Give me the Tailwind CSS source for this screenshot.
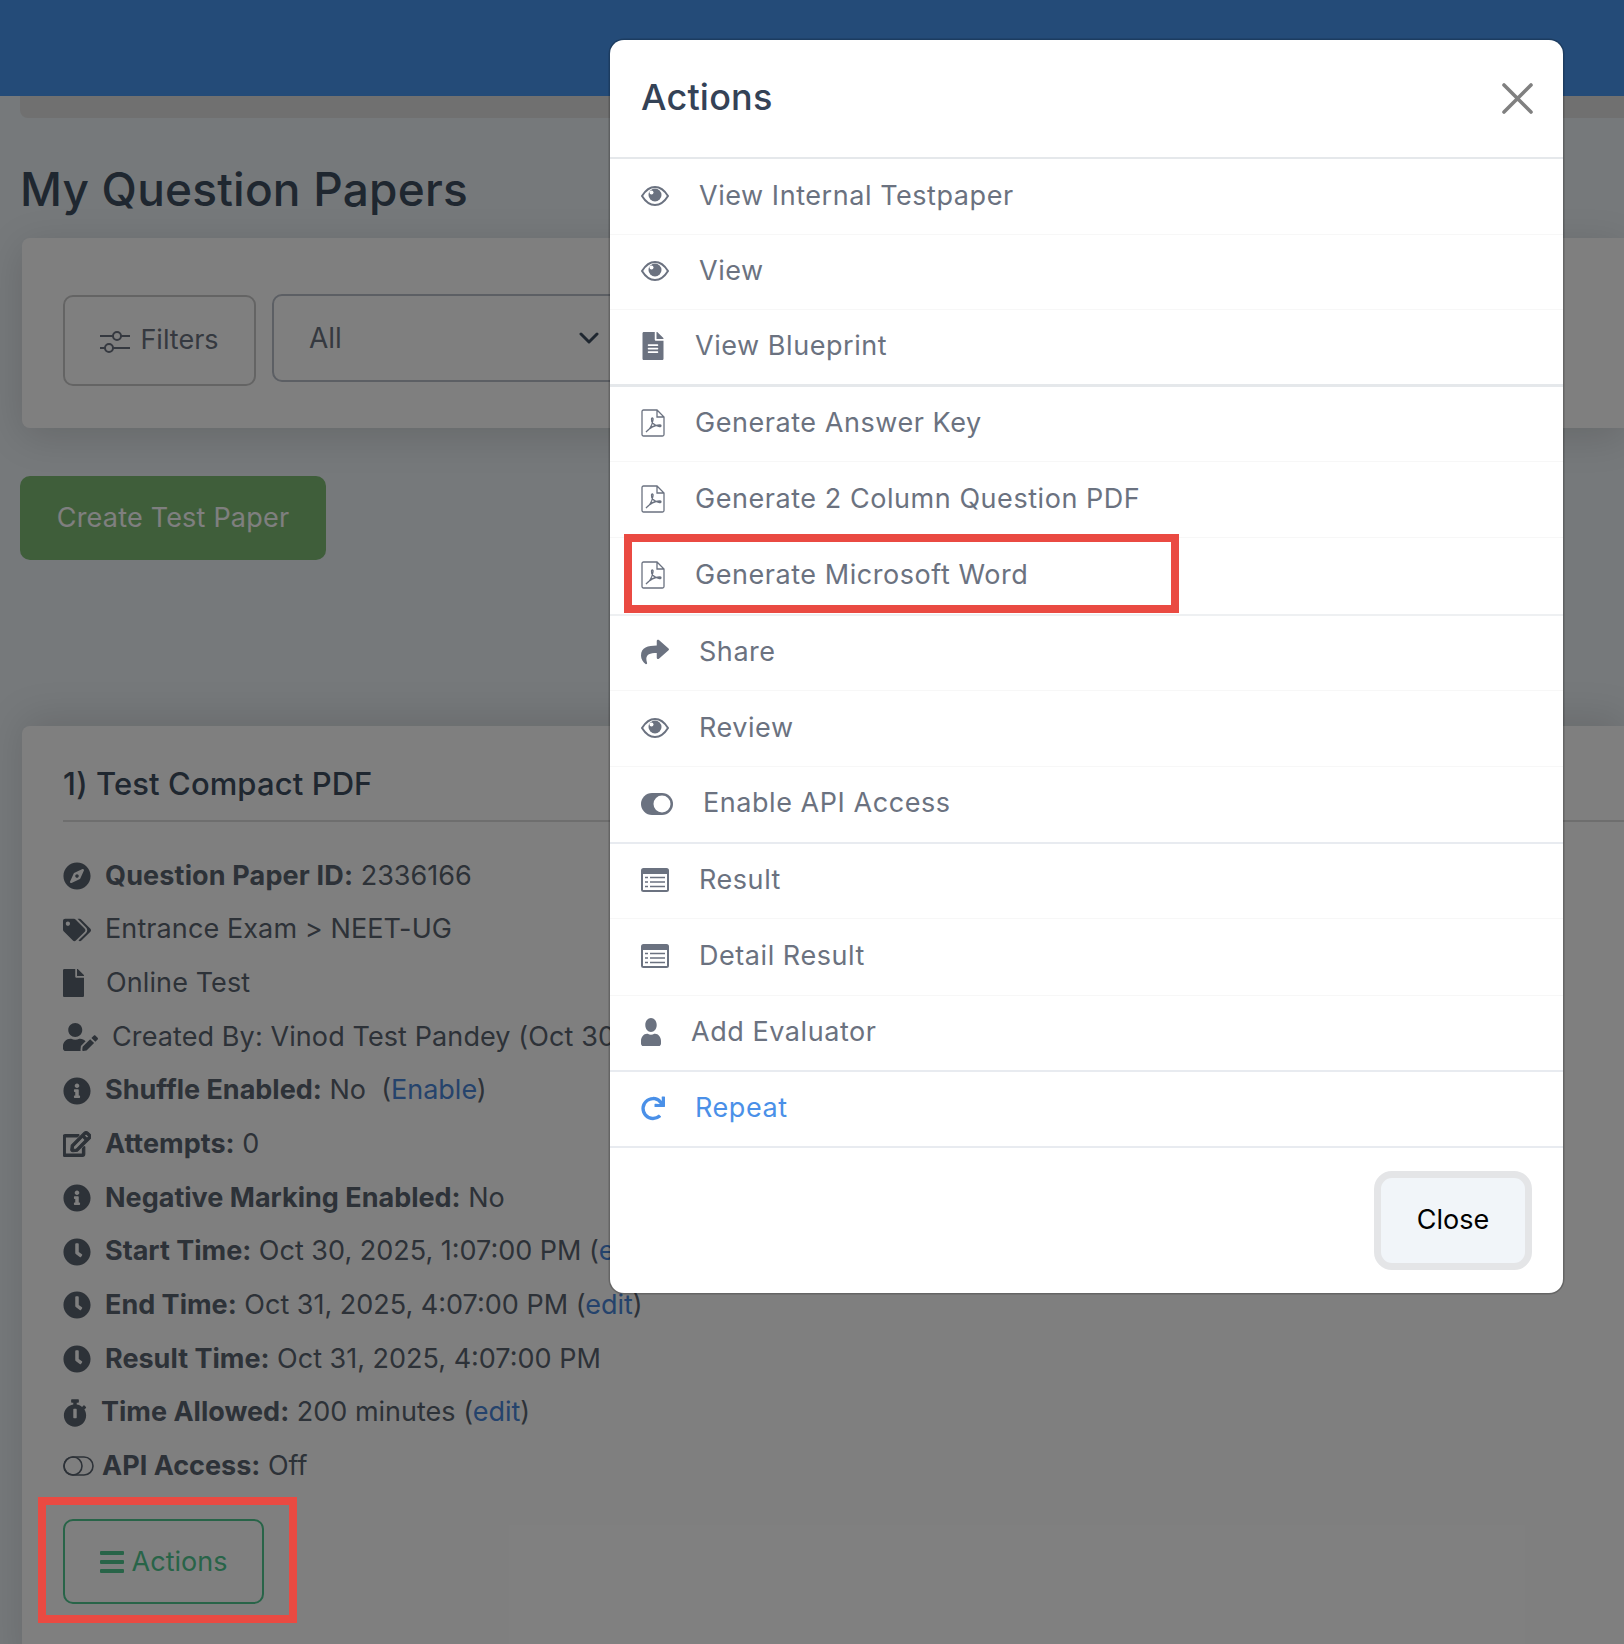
<!DOCTYPE html>
<html lang="en">
<head>
    <meta charset="UTF-8">
    <title>My Question Papers</title>
    <script src="https://cdn.jsdelivr.net/npm/@tailwindcss/browser@4"></script>
</head>
<body class="bg-[#ecf2f6] font-['Inter',sans-serif]">
<div class="relative h-[1644px] overflow-hidden">
    <!-- page behind the backdrop -->
    <header class="h-[96px] bg-[#4896f0]"></header>
    <div class="ml-[20px] h-[22px] rounded-bl-[8px] bg-[#e0e0e0]"></div>

    <main class="pl-[20px]">
        <h1 class="mt-[43px] text-[46px] leading-[56px] tracking-[0.2px] font-medium text-[#3e4e60]">My Question Papers</h1>

        <section class="mt-[21px] ml-[2px] h-[190px] rounded-l-[8px] bg-white shadow-[0_8px_40px_rgba(0,0,0,0.14)] pl-[41px] pt-[57px] flex items-start gap-[16px]">
            <button class="h-[91px] w-[193px] rounded-[10px] border-2 border-[#c9c9c9] flex items-center justify-center gap-[10px] text-[27px] text-[#6b7280]">
                <svg class="w-[30px] h-[26px]" viewBox="0 0 30 26" fill="none" stroke="currentColor" stroke-width="2">
                    <path d="M0 8h13M21 8h9M0 20h5M13 20h17"/>
                    <circle cx="17" cy="8" r="4"/>
                    <circle cx="9" cy="20" r="4"/>
                </svg>
                Filters
            </button>
            <div class="-mt-[1px] h-[88px] w-[400px] rounded-[10px] border-2 border-[#b8bec8] flex items-center justify-between pl-[35px] pr-[71px] text-[28px] text-[#6b7280]">
                All
                <svg class="w-[20px] h-[12px]" viewBox="0 0 20 12" fill="none" stroke="#3e4e60" stroke-width="3" stroke-linecap="round" stroke-linejoin="round"><path d="M2 2l8 8 8-8"/></svg>
            </div>
        </section>

        <button class="mt-[48px] h-[84px] w-[306px] rounded-[10px] bg-[#7ebc74] text-white text-[27px] tracking-[0.2px]">Create Test Paper</button>

        <section class="mt-[166px] ml-[2px] h-[950px] rounded-tl-[8px] bg-white shadow-[0_-8px_40px_rgba(0,0,0,0.12)] pl-[41px] pt-[34px]">
            <h2 class="h-[62px] text-[31px] leading-[48px] tracking-[0.1px] font-medium text-[#3e4e60] border-b-2 border-[#dcdcdc]">1) Test Compact PDF</h2>
            <ul class="mt-[27px] text-[27px] text-[#5b6470]">
                <li class="h-[53.7px] flex items-center gap-[14px]">
                    <svg class="w-[28px] h-[28px] fill-[#5b6470]" viewBox="0 0 496 512"><path d="M225.38 233.37c-12.5 12.5-12.5 32.76 0 45.25 12.49 12.5 32.76 12.5 45.25 0 12.5-12.5 12.5-32.76 0-45.25-12.5-12.49-32.76-12.49-45.25 0zM248 8C111.03 8 0 119.03 0 256s111.03 248 248 248 248-111.03 248-248S384.97 8 248 8zm126.14 148.05L308.17 300.4a31.938 31.938 0 0 1-15.77 15.77l-144.34 65.97c-16.65 7.61-33.81-9.55-26.2-26.2l65.98-144.35a31.938 31.938 0 0 1 15.77-15.77l144.34-65.97c16.65-7.6 33.8 9.55 26.19 26.2z"/></svg>
                    <span class="whitespace-pre"><b class="font-bold tracking-[0.15px]">Question Paper ID:</b> 2336166</span>
                </li>
                <li class="h-[53.7px] flex items-center gap-[14px]">
                    <svg class="w-[28px] h-[28px] fill-[#5b6470]" viewBox="0 0 640 512"><path d="M497.941 225.941L286.059 14.059A48 48 0 0 0 252.118 0H48C21.49 0 0 21.49 0 48v204.118a48 48 0 0 0 14.059 33.941l211.882 211.882c18.744 18.745 49.136 18.746 67.882 0l204.118-204.118c18.745-18.745 18.745-49.137 0-67.882zM112 160c-26.51 0-48-21.49-48-48s21.49-48 48-48 48 21.49 48 48-21.49 48-48 48zm513.941 133.823L421.823 497.941c-18.745 18.745-49.137 18.745-67.882 0l-.36-.36L527.64 323.522c16.999-16.999 26.36-39.6 26.36-63.64s-9.362-46.641-26.36-63.64L331.397 0h48.721a48 48 0 0 1 33.941 14.059l211.882 211.882c18.745 18.745 18.745 49.137 0 67.882z"/></svg>
                    <span class="tracking-[0.1px]">Entrance Exam &gt; NEET-UG</span>
                </li>
                <li class="h-[53.7px] flex items-center gap-[22px]">
                    <svg class="w-[21px] h-[28px] fill-[#5b6470]" viewBox="0 0 384 512"><path d="M224 136V0H24C10.7 0 0 10.7 0 24v464c0 13.3 10.7 24 24 24h336c13.3 0 24-10.7 24-24V160H248c-13.2 0-24-10.8-24-24zm160-14.1v6.1H256V0h6.1c6.4 0 12.5 2.5 17 7l97.9 98c4.5 4.5 7 10.6 7 16.9z"/></svg>
                    <span class="tracking-[0.1px]">Online Test</span>
                </li>
                <li class="h-[53.7px] flex items-center gap-[14px]">
                    <svg class="w-[35px] h-[28px] fill-[#5b6470]" viewBox="0 0 640 512"><path d="M224 256c70.7 0 128-57.3 128-128S294.7 0 224 0 96 57.3 96 128s57.3 128 128 128zm89.6 32h-16.7c-22.2 10.2-46.9 16-72.9 16s-50.6-5.8-72.9-16h-16.7C60.2 288 0 348.2 0 422.4V464c0 26.5 21.5 48 48 48h274.9c-2.4-6.8-3.4-14-2.6-21.3l6.8-60.9 1.2-11.1 7.9-7.9 77.3-77.3c-24.5-27.7-60-45.5-99.9-45.5zm45.3 145.3l-6.8 61c-1.1 10.2 7.5 18.8 17.6 17.6l60.9-6.8 137.9-137.9-71.7-71.7-137.9 137.8zM633 268.9L595.1 231c-9.3-9.3-24.5-9.3-33.8 0l-37.8 37.8-4.1 4.1 71.8 71.7 41.8-41.8c9.3-9.4 9.3-24.5 0-33.9z"/></svg>
                    <span class="whitespace-nowrap tracking-[0.1px]">Created By: Vinod Test Pandey (Oct 30, 2025)</span>
                </li>
                <li class="h-[53.7px] flex items-center gap-[14px]">
                    <svg class="w-[28px] h-[28px] fill-[#5b6470]" viewBox="0 0 512 512"><path d="M256 8C119.043 8 8 119.083 8 256c0 136.997 111.043 248 248 248s248-111.003 248-248C504 119.083 392.957 8 256 8zm0 110c23.196 0 42 18.804 42 42s-18.804 42-42 42-42-18.804-42-42 18.804-42 42-42zm56 254c0 6.627-5.373 12-12 12h-88c-6.627 0-12-5.373-12-12v-24c0-6.627 5.373-12 12-12h12v-64h-12c-6.627 0-12-5.373-12-12v-24c0-6.627 5.373-12 12-12h64c6.627 0 12 5.373 12 12v100h12c6.627 0 12 5.373 12 12v24z"/></svg>
                    <span><b class="font-bold">Shuffle Enabled:</b> No &nbsp;(<a class="text-[#4a86d8]">Enable</a>)</span>
                </li>
                <li class="h-[53.7px] flex items-center gap-[14px]">
                    <svg class="w-[28px] h-[28px] fill-[#5b6470] stroke-[#5b6470] stroke-[24px]" viewBox="0 0 576 512"><path d="M402.3 344.9l32-32c5-5 13.7-1.5 13.7 5.7V464c0 26.5-21.5 48-48 48H48c-26.5 0-48-21.5-48-48V112c0-26.5 21.5-48 48-48h273.5c7.1 0 10.7 8.6 5.7 13.7l-32 32c-1.5 1.5-3.5 2.3-5.7 2.3H48v352h352V350.5c0-2.1.8-4.1 2.3-5.6zm156.6-201.8L296.3 405.7l-90.4 10c-26.2 2.9-48.5-19.2-45.6-45.6l10-90.4L432.9 17.1c22.9-22.9 59.9-22.9 82.7 0l43.2 43.2c22.9 22.9 22.9 60 .1 82.8zM460.1 174L402 115.9 216.2 301.8l-7.3 65.3 65.3-7.3L460.1 174zm64.8-79.7l-43.2-43.2c-4.1-4.1-10.8-4.1-14.8 0L436 82l58.1 58.1 30.9-30.9c4-4.2 4-10.8-.1-14.9z"/></svg>
                    <span><b class="font-bold">Attempts:</b> 0</span>
                </li>
                <li class="h-[53.7px] flex items-center gap-[14px]">
                    <svg class="w-[28px] h-[28px] fill-[#5b6470]" viewBox="0 0 512 512"><path d="M256 8C119.043 8 8 119.083 8 256c0 136.997 111.043 248 248 248s248-111.003 248-248C504 119.083 392.957 8 256 8zm0 110c23.196 0 42 18.804 42 42s-18.804 42-42 42-42-18.804-42-42 18.804-42 42-42zm56 254c0 6.627-5.373 12-12 12h-88c-6.627 0-12-5.373-12-12v-24c0-6.627 5.373-12 12-12h12v-64h-12c-6.627 0-12-5.373-12-12v-24c0-6.627 5.373-12 12-12h64c6.627 0 12 5.373 12 12v100h12c6.627 0 12 5.373 12 12v24z"/></svg>
                    <span><b class="font-bold">Negative Marking Enabled:</b> No</span>
                </li>
                <li class="h-[53.7px] flex items-center gap-[14px]">
                    <svg class="w-[28px] h-[28px] fill-[#5b6470]" viewBox="0 0 512 512"><path d="M256,8C119,8,8,119,8,256S119,504,256,504,504,393,504,256,393,8,256,8Zm92.49,313h0l-20,25a16,16,0,0,1-22.49,2.5h0l-67-49.72a40,40,0,0,1-15-31.23V112a16,16,0,0,1,16-16h32a16,16,0,0,1,16,16V256l58,42.5A16,16,0,0,1,348.49,321Z"/></svg>
                    <span class="whitespace-nowrap"><b class="font-bold">Start Time:</b> Oct 30, 2025, 1:07:00 PM (<a class="text-[#4a86d8]">edit</a>)</span>
                </li>
                <li class="h-[53.7px] flex items-center gap-[14px]">
                    <svg class="w-[28px] h-[28px] fill-[#5b6470]" viewBox="0 0 512 512"><path d="M256,8C119,8,8,119,8,256S119,504,256,504,504,393,504,256,393,8,256,8Zm92.49,313h0l-20,25a16,16,0,0,1-22.49,2.5h0l-67-49.72a40,40,0,0,1-15-31.23V112a16,16,0,0,1,16-16h32a16,16,0,0,1,16,16V256l58,42.5A16,16,0,0,1,348.49,321Z"/></svg>
                    <span class="whitespace-nowrap"><b class="font-bold">End Time:</b> Oct 31, 2025, 4:07:00 PM (<a class="text-[#4a86d8]">edit</a>)</span>
                </li>
                <li class="h-[53.7px] flex items-center gap-[14px]">
                    <svg class="w-[28px] h-[28px] fill-[#5b6470]" viewBox="0 0 512 512"><path d="M256,8C119,8,8,119,8,256S119,504,256,504,504,393,504,256,393,8,256,8Zm92.49,313h0l-20,25a16,16,0,0,1-22.49,2.5h0l-67-49.72a40,40,0,0,1-15-31.23V112a16,16,0,0,1,16-16h32a16,16,0,0,1,16,16V256l58,42.5A16,16,0,0,1,348.49,321Z"/></svg>
                    <span class="whitespace-nowrap"><b class="font-bold">Result Time:</b> Oct 31, 2025, 4:07:00 PM</span>
                </li>
                <li class="h-[53.7px] flex items-center gap-[14px]">
                    <svg class="w-[24px] h-[28px] fill-[#5b6470]" viewBox="0 0 448 512"><path d="M432 304c0 114.9-93.1 208-208 208S16 418.9 16 304c0-104 76.3-190.2 176-205.5V64h-28c-6.6 0-12-5.4-12-12V12c0-6.6 5.4-12 12-12h120c6.6 0 12 5.4 12 12v40c0 6.6-5.4 12-12 12h-28v34.5c37.5 5.8 71.7 21.6 99.7 44.6l27.5-27.5c4.7-4.7 12.3-4.7 17 0l28.3 28.3c4.7 4.7 4.7 12.3 0 17l-29.4 29.4-.6.6C419.7 223.3 432 262.2 432 304zm-176 36V188.5c0-6.6-5.4-12-12-12h-40c-6.6 0-12 5.4-12 12V340c0 6.6 5.4 12 12 12h40c6.6 0 12-5.4 12-12z"/></svg>
                    <span class="whitespace-nowrap"><b class="font-bold">Time Allowed:</b> 200 minutes (<a class="text-[#4a86d8]">edit</a>)</span>
                </li>
                <li class="h-[53.7px] flex items-center gap-[8px]">
                    <svg class="w-[31px] h-[20px]" viewBox="0 0 31 20" fill="none" stroke="#5b6470" stroke-width="1.6"><rect x="1" y="1" width="29" height="18" rx="9"/><circle cx="10" cy="10" r="9"/></svg>
                    <span><b class="font-bold">API Access:</b> Off</span>
                </li>
            </ul>
            <button class="mt-[26px] h-[85px] w-[201px] rounded-[10px] border-2 border-[#50c890] flex items-center justify-center gap-[8px] text-[27px] text-[#50c890]">
                <svg class="w-[24px] h-[22px] fill-current" viewBox="0 0 24 22"><rect width="24" height="4" rx="1"/><rect y="9" width="24" height="4" rx="1"/><rect y="18" width="24" height="4" rx="1"/></svg>
                Actions
            </button>
        </section>
    </main>

    <!-- backdrop -->
    <div class="absolute inset-0 bg-black/50"></div>

    <!-- callout round the page's Actions button -->
    <div class="absolute left-[38px] top-[1497px] w-[259px] h-[126px] border-[8px] border-[#ea4a42]"></div>

    <!-- modal -->
    <div class="absolute left-[610px] top-[40px] w-[953px] h-[1253px] rounded-[14px] bg-white shadow-[0_0_0_1.5px_rgba(0,0,0,0.2)]">
        <div class="h-[119px] px-[31px] pb-[4px] border-b-2 border-[#e5e8eb] flex items-center justify-between">
            <h3 class="text-[36px] tracking-[0.2px] font-medium text-[#344256]">Actions</h3>
            <svg class="w-[31px] h-[31px] -mr-[1px] mt-[4px]" viewBox="0 0 31 31" stroke="#808080" stroke-width="3.6" stroke-linecap="round"><path d="M2 2l27 27M29 2L2 29"/></svg>
        </div>

        <ul class="text-[27px] tracking-[0.55px] text-[#6b7280]">
            <li class="h-[75.5px] pb-[1px] px-[31px] flex items-center gap-[30px] border-b border-[#f7f7f7]">
                <svg class="w-[28px] h-[20px]" viewBox="0 0 28 20"><path d="M1 10C5 3.5 9 1 14 1s9 2.500 13 9c-4 6.500-8 9-13 9S5 16.500 1 10z" fill="none" stroke="#6b7280" stroke-width="2"/><circle cx="14" cy="9" r="6.500" fill="#6b7280"/><circle cx="10.500" cy="6.500" r="2" fill="#fff"/></svg>
                <span>View Internal Testpaper</span>
            </li>
            <li class="h-[75.5px] pb-[1px] px-[31px] flex items-center gap-[30px] border-b border-[#f7f7f7]">
                <svg class="w-[28px] h-[20px]" viewBox="0 0 28 20"><path d="M1 10C5 3.5 9 1 14 1s9 2.500 13 9c-4 6.500-8 9-13 9S5 16.500 1 10z" fill="none" stroke="#6b7280" stroke-width="2"/><circle cx="14" cy="9" r="6.500" fill="#6b7280"/><circle cx="10.500" cy="6.500" r="2" fill="#fff"/></svg>
                <span>View</span>
            </li>
            <li class="h-[76.5px] pb-[1px] px-[31px] flex items-center gap-[30px] border-b-[3px] border-[#e5e8eb]">
                <svg class="w-[24px] h-[28px] fill-[#6b7280]" viewBox="0 0 384 512"><path d="M224 136V0H24C10.7 0 0 10.7 0 24v464c0 13.3 10.7 24 24 24h336c13.3 0 24-10.7 24-24V160H248c-13.2 0-24-10.8-24-24zm64 236c0 6.6-5.4 12-12 12H108c-6.6 0-12-5.4-12-12v-8c0-6.6 5.4-12 12-12h168c6.6 0 12 5.4 12 12v8zm0-64c0 6.6-5.4 12-12 12H108c-6.6 0-12-5.4-12-12v-8c0-6.6 5.4-12 12-12h168c6.6 0 12 5.4 12 12v8zm0-72v8c0 6.6-5.4 12-12 12H108c-6.6 0-12-5.4-12-12v-8c0-6.6 5.4-12 12-12h168c6.6 0 12 5.4 12 12zm96-114.1v6.1H256V0h6.1c6.4 0 12.5 2.5 17 7l97.9 98c4.5 4.5 7 10.6 7 16.9z"/></svg>
                <span>View Blueprint</span>
            </li>
            <li class="h-[75.5px] pb-[1px] px-[31px] flex items-center gap-[30px] border-b border-[#f7f7f7]">
                <svg class="w-[24px] h-[28px]" viewBox="0 0 24 28" fill="none" stroke="#6b7280" stroke-width="1.3"><path d="M1 2.500A1.500 1.500 0 012.500 1H16l7 7v17.500a1.500 1.500 0 01-1.500 1.500h-19A1.500 1.500 0 011 25.500zM16 1v7h7"/><path d="M5 23c3-2 6-6 7-12 .5-2-1-3-1.500-1-.5 3 3 7 8 7.500 2 .2 2-1.500 0-1.500-4 0-9 2-13.500 7z"/></svg>
                <span>Generate Answer Key</span>
            </li>
            <li class="h-[75.5px] pb-[1px] px-[31px] flex items-center gap-[30px] border-b border-[#f7f7f7]">
                <svg class="w-[24px] h-[28px]" viewBox="0 0 24 28" fill="none" stroke="#6b7280" stroke-width="1.3"><path d="M1 2.500A1.500 1.500 0 012.500 1H16l7 7v17.500a1.500 1.500 0 01-1.500 1.500h-19A1.500 1.500 0 011 25.500zM16 1v7h7"/><path d="M5 23c3-2 6-6 7-12 .5-2-1-3-1.500-1-.5 3 3 7 8 7.500 2 .2 2-1.500 0-1.500-4 0-9 2-13.500 7z"/></svg>
                <span>Generate 2 Column Question PDF</span>
            </li>
            <li class="h-[78px] pb-[1px] px-[31px] flex items-center gap-[30px] border-b-2 border-[#eef0f2]">
                <svg class="w-[24px] h-[28px]" viewBox="0 0 24 28" fill="none" stroke="#6b7280" stroke-width="1.3"><path d="M1 2.500A1.500 1.500 0 012.500 1H16l7 7v17.500a1.500 1.500 0 01-1.500 1.500h-19A1.500 1.500 0 011 25.500zM16 1v7h7"/><path d="M5 23c3-2 6-6 7-12 .5-2-1-3-1.500-1-.5 3 3 7 8 7.500 2 .2 2-1.500 0-1.500-4 0-9 2-13.500 7z"/></svg>
                <span>Generate Microsoft Word</span>
            </li>
            <li class="h-[75.5px] pb-[1px] px-[31px] flex items-center gap-[30px] border-b border-[#f7f7f7]">
                <svg class="w-[28px] h-[28px] fill-[#6b7280]" viewBox="0 0 512 512"><path d="M503.691 189.836L327.687 37.851C312.281 24.546 288 35.347 288 56.015v80.053C127.371 137.907 0 170.1 0 322.326c0 61.441 39.581 122.309 83.333 154.132 13.653 9.931 33.111-2.533 28.077-18.631C66.066 312.814 132.917 274.316 288 272.085V360c0 20.7 24.3 31.453 39.687 18.164l176.004-152c11.071-9.562 11.086-26.753 0-36.328z"/></svg>
                <span>Share</span>
            </li>
            <li class="h-[75.5px] pb-[1px] px-[31px] flex items-center gap-[30px] border-b border-[#f7f7f7]">
                <svg class="w-[28px] h-[20px]" viewBox="0 0 28 20"><path d="M1 10C5 3.5 9 1 14 1s9 2.500 13 9c-4 6.500-8 9-13 9S5 16.500 1 10z" fill="none" stroke="#6b7280" stroke-width="2"/><circle cx="14" cy="9" r="6.500" fill="#6b7280"/><circle cx="10.500" cy="6.500" r="2" fill="#fff"/></svg>
                <span>Review</span>
            </li>
            <li class="h-[77px] pb-[1px] px-[31px] flex items-center gap-[30px] border-b-2 border-[#e8ebf0]">
                <svg class="w-[32px] h-[22px]" viewBox="0 0 32 22"><rect width="32" height="22" rx="11" fill="#6b7280"/><circle cx="21" cy="11" r="8.500" fill="#fff"/></svg>
                <span>Enable API Access</span>
            </li>
            <li class="h-[75.5px] pb-[1px] px-[31px] flex items-center gap-[30px] border-b border-[#f7f7f7]">
                <svg class="w-[28px] h-[24px]" viewBox="0 0 28 24"><rect width="28" height="24" rx="2.500" fill="#6b7280"/><rect x="2" y="6" width="24" height="16" fill="#fff"/><path d="M4 9.500h3M9 9.500h15M4 14h3M9 14h15M4 18.500h3M9 18.500h15" stroke="#6b7280" stroke-width="1.6"/></svg>
                <span>Result</span>
            </li>
            <li class="h-[76.5px] pb-[1px] px-[31px] flex items-center gap-[30px] border-b border-[#f7f7f7]">
                <svg class="w-[28px] h-[24px]" viewBox="0 0 28 24"><rect width="28" height="24" rx="2.500" fill="#6b7280"/><rect x="2" y="6" width="24" height="16" fill="#fff"/><path d="M4 9.500h3M9 9.500h15M4 14h3M9 14h15M4 18.500h3M9 18.500h15" stroke="#6b7280" stroke-width="1.6"/></svg>
                <span>Detail Result</span>
            </li>
            <li class="h-[76.5px] pb-[1px] px-[31px] flex items-center gap-[30px] border-b-2 border-[#e8ebf0]">
                <svg class="w-[20px] h-[28px] fill-[#6b7280]" viewBox="0 0 448 512" preserveAspectRatio="none"><path d="M224 256c70.7 0 128-57.3 128-128S294.7 0 224 0 96 57.3 96 128s57.3 128 128 128zm89.6 32h-16.7c-22.2 10.2-46.9 16-72.9 16s-50.6-5.8-72.9-16h-16.7C60.2 288 0 348.2 0 422.4V464c0 26.5 21.5 48 48 48h352c26.5 0 48-21.5 48-48v-41.6c0-74.2-60.2-134.4-134.4-134.4z"/></svg>
                <span>Add Evaluator</span>
            </li>
            <li class="h-[76px] pb-[1px] px-[31px] flex items-center gap-[30px] border-b-2 border-[#e8ebf0] text-[#4a90e8]">
                <svg class="w-[24px] h-[25px] fill-[#4a90e8]" viewBox="0 0 512 512"><path d="M500.33 0h-47.41a12 12 0 0 0-12 12.57l4 82.76A247.42 247.42 0 0 0 256 8C119.34 8 7.9 119.53 8 256.19 8.1 393.07 119.1 504 256 504a247.1 247.1 0 0 0 166.18-63.91 12 12 0 0 0 .48-17.43l-34-34a12 12 0 0 0-16.38-.55A176 176 0 1 1 402.1 157.8l-101.53-4.87a12 12 0 0 0-12.57 12v47.41a12 12 0 0 0 12 12h200.33a12 12 0 0 0 12-12V12a12 12 0 0 0-12-12z"/></svg>
                <span>Repeat</span>
            </li>
        </ul>

        <div class="flex justify-end pt-[23px] pr-[31px]">
            <button class="h-[99px] w-[158px] rounded-[18px] border-[7px] border-[#e4e5e7] bg-[#f1f5f9] text-[27px] text-black">Close</button>
        </div>

        <!-- callout round Generate Microsoft Word -->
        <div class="absolute left-[14px] top-[494px] w-[555px] h-[79px] border-[8px] border-[#ea4a42]"></div>
    </div>
</div>
</body>
</html>
